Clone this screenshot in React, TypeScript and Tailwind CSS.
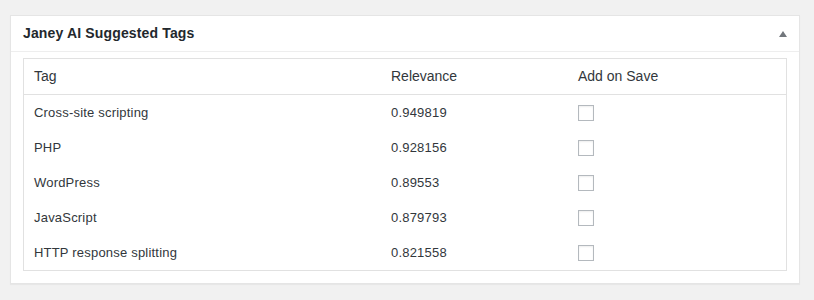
import React from "react";

const tags = [
  { name: "Cross-site scripting", relevance: "0.949819" },
  { name: "PHP", relevance: "0.928156" },
  { name: "WordPress", relevance: "0.89553" },
  { name: "JavaScript", relevance: "0.879793" },
  { name: "HTTP response splitting", relevance: "0.821558" },
];

export default function App() {
  return (
    <div
      className="min-h-[300px] bg-[#f1f1f1] pt-[15px] pl-[10px] pr-[14px]"
      style={{ fontFamily: '"Liberation Sans", Arial, sans-serif' }}
    >
      <div className="w-[790px] border border-[#e5e5e5] bg-white shadow-[0_1px_1px_rgba(0,0,0,0.04)]">
        <div className="flex h-[36px] items-center justify-between border-b border-[#eeeeee] pl-3 pr-3">
          <h2 className="text-[14px] font-bold tracking-[0.15px] text-[#23282d]">Janey AI Suggested Tags</h2>
          <svg width="8" height="6" viewBox="0 0 8 6">
            <path d="M4 0 L8 6 L0 6 Z" fill="#72777c" />
          </svg>
        </div>
        <div className="px-3 pt-[6px] pb-3">
          <div className="border border-[#e1e1e1]">
            <div className="grid h-[36px] grid-cols-[357px_187px_1fr] items-center border-b border-[#e1e1e1] text-[14px] text-[#32373c]">
              <div className="pl-[10px]">Tag</div>
              <div className="pl-[10px]">Relevance</div>
              <div className="pl-[10px]">Add on Save</div>
            </div>
            {tags.map((t) => (
              <div
                key={t.name}
                className="grid h-[35px] grid-cols-[357px_187px_1fr] items-center text-[13px] tracking-[0.2px] text-[#32373c]"
              >
                <div className="pl-[10px]">{t.name}</div>
                <div className="pl-[10px]">{t.relevance}</div>
                <div className="pl-[10px]">
                  <div className="h-4 w-4 border border-[#b4b9be] bg-white shadow-[inset_0_1px_2px_rgba(0,0,0,0.07)]" />
                </div>
              </div>
            ))}
          </div>
        </div>
      </div>
    </div>
  );
}
